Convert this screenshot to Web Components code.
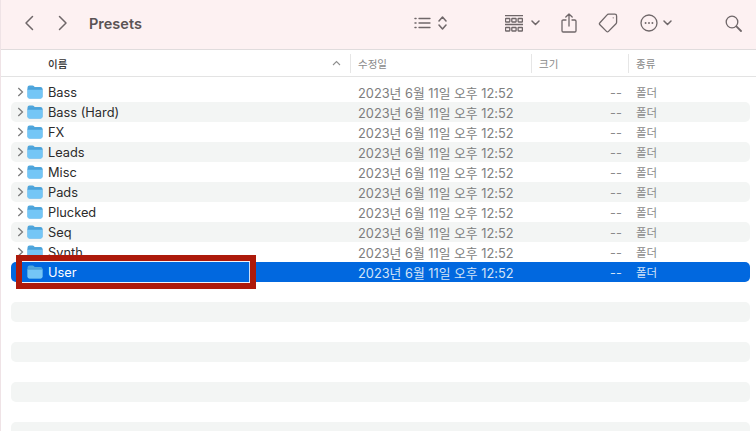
<!DOCTYPE html>
<html lang="ko">
<head>
<meta charset="utf-8">
<title>Presets</title>
<style>
  html, body { margin: 0; height: 100%; overflow: hidden; background: #fff; }
  body { font-family: Inter, "Noto Sans CJK KR", sans-serif; }
</style>
</head>
<body>
<finder-window>
  <finder-toolbar slot="toolbar" title="Presets"></finder-toolbar>
  <list-header slot="header"></list-header>
  <file-row name="Bass"></file-row>
  <file-row name="Bass (Hard)" striped></file-row>
  <file-row name="FX"></file-row>
  <file-row name="Leads" striped></file-row>
  <file-row name="Misc"></file-row>
  <file-row name="Pads" striped></file-row>
  <file-row name="Plucked"></file-row>
  <file-row name="Seq" striped></file-row>
  <file-row name="Synth"></file-row>
  <file-row name="User" selected></file-row>
  <file-row></file-row>
  <file-row striped></file-row>
  <file-row></file-row>
  <file-row striped></file-row>
  <file-row></file-row>
  <file-row striped></file-row>
  <file-row></file-row>
  <file-row striped></file-row>
  <mark-box slot="overlay"></mark-box>
</finder-window>

<script>
class FinderWindow extends HTMLElement {
  constructor() {
    super();
    this.attachShadow({ mode: 'open' }).innerHTML = `
      <style>
        :host { display: block; position: relative; width: 756px; height: 431px; overflow: hidden;
          box-sizing: border-box; border-left: 1px solid #efe3e6; background: #fff; }
        .rows { display: flex; flex-direction: column; padding: 5px 6px 0 10px; }
      </style>
      <slot name="toolbar"></slot>
      <slot name="header"></slot>
      <div class="rows"><slot></slot></div>
      <slot name="overlay"></slot>`;
  }
}

class FinderToolbar extends HTMLElement {
  constructor() {
    super();
    const title = this.getAttribute('title');
    this.attachShadow({ mode: 'open' }).innerHTML = `
      <style>
        :host { display: flex; align-items: center; height: 50px; box-sizing: border-box; padding-bottom: 3px;
          background: #fdf1f2; border-bottom: 1px solid #e0dcdd; color: #6f6769; }
        svg { display: block; fill: none; stroke: currentColor; stroke-width: 1.3;
          stroke-linecap: round; stroke-linejoin: round; flex: none; }
        h1 { margin: 0 0 0 21px; font: 600 14.5px Inter, sans-serif; color: #5a5354; flex: none; width: 325px; }
        .nav { margin-left: 23px; stroke-width: 1.5; }
        .nav + .nav { margin-left: 24px; }
        .group { display: flex; align-items: center; }
      </style>
      <svg class="nav" width="10" height="16" viewBox="0 0 10 16"><path d="M8.5 1.5 2 8l6.5 6.5"/></svg>
      <svg class="nav" width="10" height="16" viewBox="0 0 10 16"><path d="M1.5 1.5 8 8l-6.5 6.500"/></svg>
      <h1>${title}</h1>
      <div class="group" style="gap:7px">
        <svg width="17" height="12" viewBox="0 0 17 12"><path d="M5 1.5h11M5 6h11M5 10.5h11"/><path d="M1 1.5h1M1 6h1M1 10.5h1" stroke-width="1.5"/></svg>
        <svg width="9" height="14" viewBox="0 0 9 14"><path d="M1 5l3.5-4L8 5M1 9l3.5 4L8 9" stroke-width="1.5"/></svg>
      </div>
      <div class="group" style="margin-left:58px;gap:8px">
        <svg width="18" height="17" viewBox="0 0 18 17" stroke-width=".9" stroke-linecap="butt"><path d="M0 .5h18M0 9.500h18"/><rect x=".5" y="3.500" width="4.300" height="3.500" rx=".4"/><rect x="6.800" y="3.500" width="4.300" height="3.500" rx=".4"/><rect x="13.100" y="3.500" width="4.300" height="3.500" rx=".4"/><rect x=".5" y="12.500" width="4.300" height="3.500" rx=".4"/><rect x="6.800" y="12.500" width="4.300" height="3.500" rx=".4"/><rect x="13.100" y="12.500" width="4.300" height="3.500" rx=".4"/></svg>
        <svg width="9" height="6" viewBox="0 0 9 6"><path d="M1 1l3.500 3.500L8 1" stroke-width="1.5"/></svg>
      </div>
      <svg style="margin-left:21px" width="16" height="20" viewBox="0 0 16 20"><path d="M5 7H2.2Q1 7 1 8.2v9.6Q1 19 2.2 19h11.6q1.2 0 1.2-1.2V8.200Q15 7 13.800 7H11M8 13V1M4.800 4 8 1l3.200 3"/></svg>
      <svg style="margin-left:21px" width="20" height="20" viewBox="0 0 20 20"><path d="M10.500 1.200h6.300q1.800 0 1.800 1.800v6.300q0 .8-.6 1.400l-7.500 7.700q-1 1-2 0l-6.600-6.600q-1-1 0-2l7.200-7.900q.5-.7 1.400-.7z"/><circle cx="15.200" cy="4.800" r=".6" fill="currentColor" stroke="none"/></svg>
      <div class="group" style="margin-left:22px;gap:5px">
        <svg width="18" height="18" viewBox="0 0 18 18" stroke-width="1.200"><circle cx="9" cy="9" r="8"/><g fill="currentColor" stroke="none"><circle cx="5.600" cy="9" r=".95"/><circle cx="9" cy="9" r=".95"/><circle cx="12.400" cy="9" r=".95"/></g></svg>
        <svg width="9" height="6" viewBox="0 0 9 6"><path d="M1 1l3.500 3.500L8 1" stroke-width="1.500"/></svg>
      </div>
      <svg style="margin-left:53px" width="17" height="17" viewBox="0 0 17 17" stroke-width="1.500"><circle cx="7" cy="7" r="5.800"/><path d="M11.400 11.400 16 16" stroke-width="1.800"/></svg>`;
  }
}

class ListHeader extends HTMLElement {
  constructor() {
    super();
    this.attachShadow({ mode: 'open' }).innerHTML = `
      <style>
        :host { display: grid; grid-template-columns: 349px 181px 97px 1fr; height: 27px; box-sizing: border-box;
          border-bottom: 1px solid #e3e3e3; background: #fff; align-items: center;
          font: 10.5px "Noto Sans CJK KR", sans-serif; color: #8a8a8a; }
        div { display: flex; align-items: center; justify-content: space-between; height: 19px; box-sizing: border-box; }
        div + div { border-left: 1px solid #e6e6e6; padding-left: 7px; }
        .name { padding: 0 9px 0 47px; color: #333; font-weight: 500; }
        svg { fill: none; stroke: #8f8f8f; stroke-width: 1.100; display: block; }
      </style>
      <div class="name"><span>이름</span><svg width="9" height="6" viewBox="0 0 9 6"><path d="M1 5l3.500-3.500L8 5"/></svg></div>
      <div>수정일</div>
      <div>크기</div>
      <div>종류</div>`;
  }
}

class FolderIcon extends HTMLElement {
  constructor() {
    super();
    this.attachShadow({ mode: 'open' }).innerHTML = `
      <style>:host { display: block; width: 16px; height: 14px; } svg { display: block; }</style>
      <svg width="16" height="14" viewBox="0 0 16 14">
        <path d="M.5 2.500Q.5 .5 2.500 .5h3q1 0 1.600 .8L7.600 2H13.500q2 0 2 2v7.500q0 2-2 2h-11q-2 0-2-2z" fill="#4fa6dc"/>
        <path d="M.5 4.200H15.500v7.300q0 2-2 2h-11q-2 0-2-2z" fill="#74c6f6"/>
        <path d="M.5 4.200H15.500" stroke="#3f97d0" stroke-width=".7" fill="none"/>
      </svg>`;
  }
}

class FileRow extends HTMLElement {
  constructor() {
    super();
    const name = this.getAttribute('name');
    const body = name === null ? '' : `
      ${this.hasAttribute('selected') ? '<span class="arrow"></span>' : `
      <svg class="arrow" width="7" height="10" viewBox="0 0 7 10"><path d="M1.300 1 5.500 5 1.300 9"/></svg>`}
      <folder-icon></folder-icon>
      <span class="name">${name}</span>
      <span class="date">2023년 6월 11일 오후 12:52</span>
      <span class="size">--</span>
      <span class="kind">폴더</span>`;
    this.attachShadow({ mode: 'open' }).innerHTML = `
      <style>
        :host { display: flex; align-items: center; height: 20px; flex: none; box-sizing: border-box;
          padding-left: 6px; border-radius: 5px; color: #2b2b2b;
          font: 12.800px Inter, "Noto Sans CJK KR", sans-serif; }
        :host([striped]) { background: #f3f5f4; }
        :host([selected]) { background: #0168df; color: #fff; }
        .arrow { width: 7px; height: 10px; flex: none; margin-right: 3px; fill: none; stroke: #7c7c7c; stroke-width: 1.300; }
        .name { margin-left: 5px; width: 310px; flex: none; white-space: nowrap; }
        .date { width: 252px; flex: none; color: #7d7d7d; white-space: nowrap; font-size: 12.800px; }
        .size { width: 26px; flex: none; color: #8a8a8a; }
        .kind { flex: none; color: #8a8a8a; font-size: 11.500px; }
        :host([selected]) .date, :host([selected]) .size, :host([selected]) .kind { color: #d3e4f8; }
      </style>${body}`;
  }
}

class MarkBox extends HTMLElement {
  constructor() {
    super();
    this.attachShadow({ mode: 'open' }).innerHTML = `
      <style>
        :host { position: absolute; left: 15px; top: 255px; width: 240px; height: 34px; box-sizing: border-box;
          border: 6px solid #ad1a0b; pointer-events: none; }
        div { height: 100%; box-sizing: border-box; border: solid rgba(238,243,250,.85); border-width: 1px 1px 1px 0; }
      </style>
      <div></div>`;
  }
}

customElements.define('finder-window', FinderWindow);
customElements.define('finder-toolbar', FinderToolbar);
customElements.define('list-header', ListHeader);
customElements.define('folder-icon', FolderIcon);
customElements.define('file-row', FileRow);
customElements.define('mark-box', MarkBox);
</script>
</body>
</html>
